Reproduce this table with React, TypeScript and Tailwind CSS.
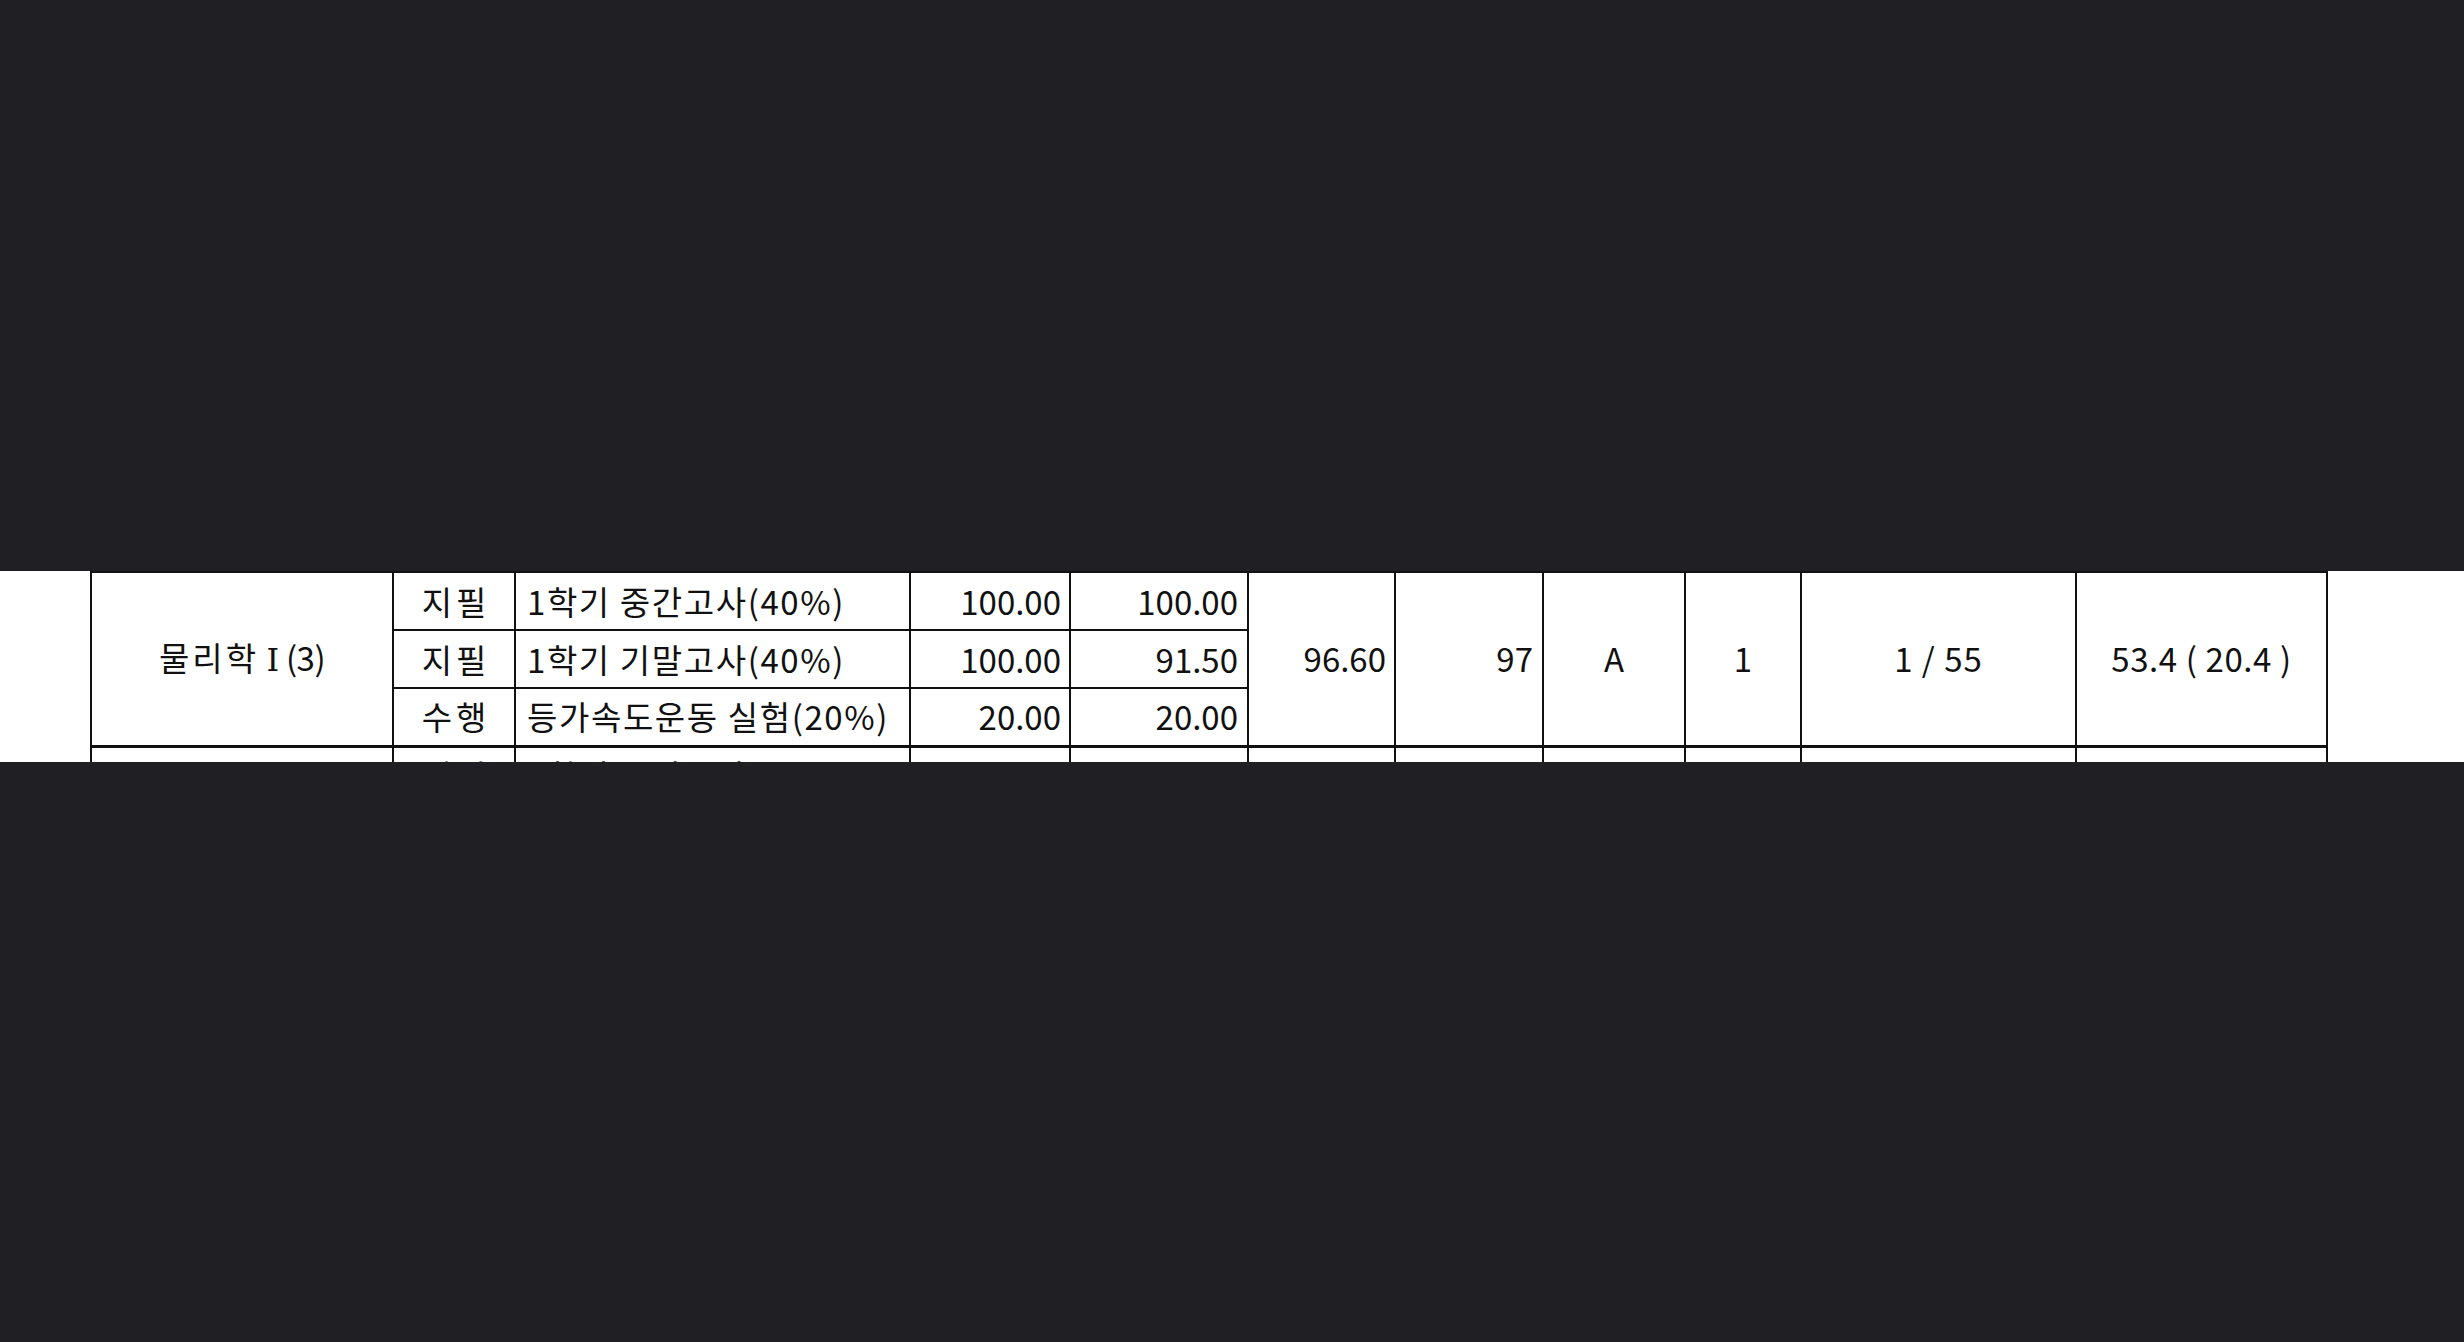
const FONT = "font-['Noto_Sans_CJK_KR','Noto_Sans',sans-serif]"

type SubRow = {
  kind: string
  name: string
  full: string
  score: string
}

const subRows: SubRow[] = [
  { kind: '지필', name: '1학기 중간고사(40%)', full: '100.00', score: '100.00' },
  { kind: '지필', name: '1학기 기말고사(40%)', full: '100.00', score: '91.50' },
  { kind: '수행', name: '등가속도운동 실험(20%)', full: '20.00', score: '20.00' },
]

const cell = 'border-2 border-[#111] p-0 align-middle'
const widths = [302, 122, 395, 160, 178, 147, 148, 142, 116, 275, 251]

export default function App() {
  return (
    <div className={`flex h-[1342px] w-full flex-col bg-[#1f1f24] ${FONT}`}>
      <div className="h-[571px] shrink-0" />

      {/* the scanned strip */}
      <div className="h-[191px] shrink-0 overflow-hidden bg-white">
        <table className="ml-[90px] table-fixed border-collapse text-[33px] leading-none text-[#111]">
          <colgroup>
            {widths.map((w, i) => (
              <col key={i} style={{ width: w }} />
            ))}
          </colgroup>
          <tbody>
            {subRows.map((r, i) => (
              <tr key={i} className={i === 2 ? 'h-[58px] border-b-[3px] border-[#111]' : 'h-[58px]'}>
                {i === 0 && (
                  <td rowSpan={3} className={`${cell} text-center whitespace-nowrap`}>
                    <span className="tracking-[3px]">물리학</span>{' '}
                    <span className="font-['DejaVu_Serif','Liberation_Serif',serif] text-[32px]">Ⅰ</span>
                    <span className="tracking-[-0.5px]"> (3)</span>
                  </td>
                )}
                <td className={`${cell} text-center tracking-[4px] indent-[4px]`}>{r.kind}</td>
                <td className={`${cell} pl-[11px] text-left whitespace-nowrap tracking-[1.6px]`}>{r.name}</td>
                <td className={`${cell} pr-[8px] text-right`}>{r.full}</td>
                <td className={`${cell} pr-[9px] text-right`}>{r.score}</td>
                {i === 0 && (
                  <>
                    <td rowSpan={3} className={`${cell} pr-[8px] text-right`}>
                      96.60
                    </td>
                    <td rowSpan={3} className={`${cell} pr-[9px] text-right`}>
                      97
                    </td>
                    <td rowSpan={3} className={`${cell} text-center`}>
                      A
                    </td>
                    <td rowSpan={3} className={`${cell} text-center`}>
                      1
                    </td>
                    <td rowSpan={3} className={`${cell} text-center tracking-[1px]`}>
                      1 / 55
                    </td>
                    <td rowSpan={3} className={`${cell} text-center tracking-[0.6px]`}>
                      53.4 ( 20.4 )
                    </td>
                  </>
                )}
              </tr>
            ))}
            {/* next subject, cut off by the crop */}
            <tr className="h-[58px]">
              <td className={cell} />
              <td className={`${cell} text-center tracking-[4px] indent-[4px]`}>지필</td>
              <td className={`${cell} pl-[11px] text-left whitespace-nowrap tracking-[1.6px]`}>1학기 중간고사(40%)</td>
              <td className={cell} />
              <td className={cell} />
              <td className={cell} />
              <td className={cell} />
              <td className={cell} />
              <td className={cell} />
              <td className={cell} />
              <td className={cell} />
            </tr>
          </tbody>
        </table>
      </div>

      <div className="flex-1" />
    </div>
  )
}
